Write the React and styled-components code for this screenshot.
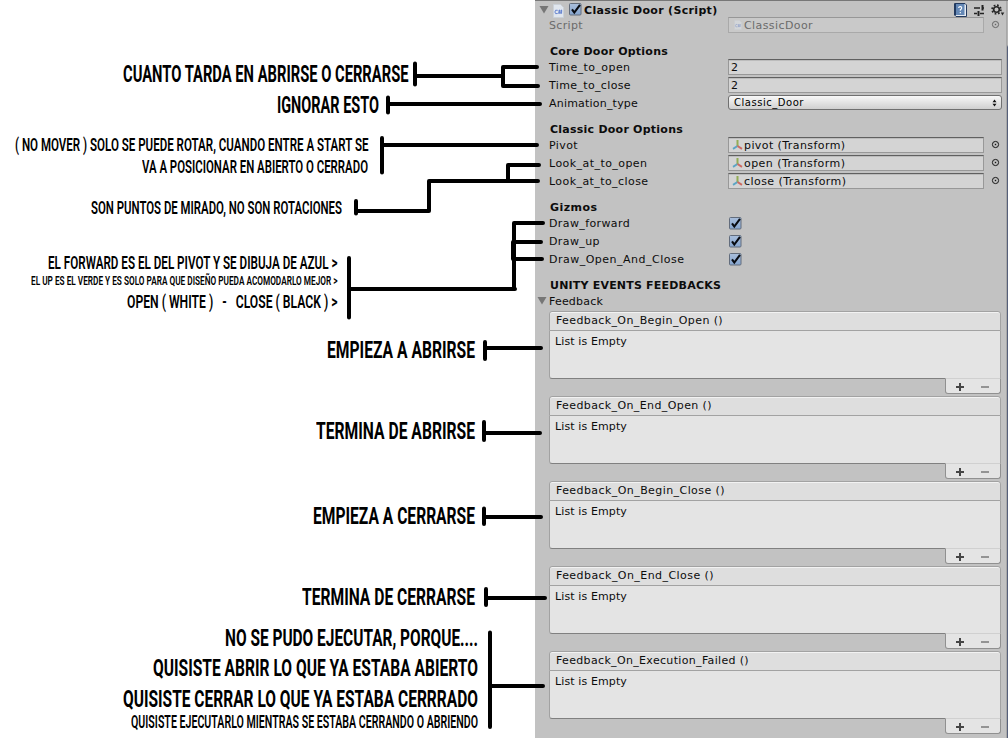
import React, { useLayoutEffect, useRef, useState } from "react";
import styled, { createGlobalStyle, css } from "styled-components";

const GlobalStyle = createGlobalStyle`
  * { box-sizing: border-box; }
  body { margin: 0; background: #fff; overflow: hidden; }
`;

const Page = styled.main`
  position: relative;
  display: flex;
  align-items: flex-start;
  width: 1008px;
  height: 742px;
  background: #fff;
`;

/* ---------- text fitted to a given width ---------- */

const FitBox = styled.span`
  display: block;
  flex: none;
  width: ${(p) => p.$width}px;
  white-space: pre;
`;

const FitInner = styled.span`
  display: inline-block;
  transform-origin: 0 50%;
`;

function Fit({ width, stretch, children }) {
  const ref = useRef(null);
  const [style, setStyle] = useState({});
  useLayoutEffect(() => {
    const natural = ref.current.getBoundingClientRect().width;
    setStyle(
      stretch
        ? { transform: `scaleX(${width / natural})` }
        : { letterSpacing: `${(width - natural) / children.length}px` }
    );
  }, []);
  return (
    <FitBox $width={width}>
      <FitInner ref={ref} style={style}>{children}</FitInner>
    </FitBox>
  );
}

/* ---------- notes on the left ---------- */

const Notes = styled.section`
  flex: none;
  width: 535px;
  display: flex;
  flex-direction: column;
  padding-right: 1px;
  color: #000;
  font-family: Roboto, "Liberation Sans", sans-serif;
`;

const Note = styled.div`
  display: flex;
  justify-content: flex-end;
  height: 16px;
  line-height: 16px;
  margin-top: ${(p) => p.$gap}px;
  padding-right: ${(p) => p.$inset}px;
  font-size: ${(p) => p.$size}px;
  font-weight: ${(p) => (p.$size > 20 ? 700 : 600)};
`;

const notes = [
  { text: "CUANTO TARDA EN ABRIRSE O CERRARSE", gap: 65.5, inset: 126, width: 285.5, size: 24 },
  { text: "IGNORAR ESTO", gap: 15, inset: 155, width: 102, size: 24 },
  { text: "( NO MOVER ) SOLO SE PUEDE ROTAR, CUANDO ENTRE A START SE", gap: 24.5, inset: 166, width: 353.5, size: 18.5 },
  { text: "VA A POSICIONAR EN ABIERTO O CERRADO", gap: 6, inset: 166, width: 226, size: 18.5 },
  { text: "SON PUNTOS DE MIRADO, NO SON ROTACIONES", gap: 25, inset: 192, width: 251, size: 18.5 },
  { text: "EL FORWARD ES EL DEL PIVOT Y SE DIBUJA DE AZUL >", gap: 38.5, inset: 197, width: 289.5, size: 18.5 },
  { text: "EL UP ES EL VERDE Y ES SOLO PARA QUE DISEÑO PUEDA ACOMODARLO MEJOR >", gap: 1.5, inset: 197, width: 306.5, size: 13.5 },
  { text: "OPEN ( WHITE )   -   CLOSE ( BLACK ) >", gap: 5.5, inset: 197, width: 210.5, size: 18.5 },
  { text: "EMPIEZA A ABRIRSE", gap: 32.5, inset: 59, width: 148, size: 24.5 },
  { text: "TERMINA DE ABRIRSE", gap: 65, inset: 59, width: 159, size: 24.5 },
  { text: "EMPIEZA A CERRARSE", gap: 69, inset: 59, width: 162, size: 24.5 },
  { text: "TERMINA DE CERRARSE", gap: 65, inset: 59, width: 173, size: 24.5 },
  { text: "NO SE PUDO EJECUTAR, PORQUE....", gap: 25, inset: 56, width: 253, size: 24.5 },
  { text: "QUISISTE ABRIR LO QUE YA ESTABA ABIERTO", gap: 14, inset: 56, width: 325, size: 24.5 },
  { text: "QUISISTE CERRAR LO QUE YA ESTABA CERRRADO", gap: 15, inset: 56, width: 355, size: 24.5 },
  { text: "QUISISTE EJECUTARLO MIENTRAS SE ESTABA CERRANDO O ABRIENDO", gap: 7, inset: 56, width: 347, size: 17.5 },
];

const Connectors = styled.svg`
  position: absolute;
  left: 0;
  top: 0;
  pointer-events: none;
  fill: none;
  stroke: #000;
  stroke-width: 4;
  stroke-linecap: round;
  stroke-linejoin: round;
`;

const connectorPaths = [
  "M415 63.5V84.5M415 76H503M537 67H503V86H538",
  "M388 97.5V112.5M388 104H540",
  "M382 138V172.500M382 145H537",
  "M356 201V213.500M356 211H429V181H538M508 181V165H539",
  "M349 258V317.500M349 289H515M514 289V223H543M513 242V259H542M514 242H541",
  "M485 342V359M485 348H541",
  "M484 422V440M484 433H540",
  "M484 508.500V524M484 517H541",
  "M486 589V605M486 598H545",
  "M490 632.500V727M490 686H543",
];

/* ---------- inspector panel ---------- */

const Panel = styled.section`
  flex: none;
  display: flex;
  flex-direction: column;
  width: 473px;
  height: 738px;
  padding: 1px 5px 0 0;
  background:
    linear-gradient(#b4b4b4 44px, #56607a 46px) right / 1px 100% no-repeat,
    linear-gradient(#a8a8a8, #a8a8a8) right 1px top / 1px 100% no-repeat,
    #c2c2c2;
  border-top: 1px solid #777;
  color: #0c0c0c;
  font-family: "DejaVu Sans", Verdana, sans-serif;
  font-size: 11px;
  line-height: 16px;
`;

const Header = styled.header`
  display: flex;
  align-items: center;
  height: 15px;
  padding-left: 3.5px;
  font-weight: 700;
`;

const HeaderTools = styled.div`
  display: flex;
  align-items: center;
  gap: 6px;
  margin-left: auto;
  margin-right: -2px;
  padding-top: 1px;
`;

const Rows = styled.div`
  display: flex;
  flex-direction: column;
  gap: 2px;
`;

const Row = styled.div`
  display: flex;
  height: 16px;
  padding-left: 14px;
  color: ${(p) => (p.$disabled ? "#6b6b6b" : "inherit")};
`;

const Label = styled.div`
  flex: none;
  width: 179px;
  line-height: 18px;
`;

const GroupTitle = styled.h2`
  height: 22px;
  margin: 0;
  padding: 9px 0 0 15px;
  font-size: 11px;
  line-height: 16px;
  font-weight: 700;
`;

const Field = styled.div`
  display: flex;
  align-items: center;
  width: ${(p) => (p.$object ? 256 : 274)}px;
  height: 16px;
  padding: 2px 0 0 2px;
  background: #d4d4d4;
  border: 1px solid #989898;
  border-top-color: #606060;
  box-shadow: inset 0 1px #bcbcbc;
  ${(p) => p.$disabled && css`
    background: #c9c9c9;
    border-color: #a9a9a9;
    border-top-color: #979797;
    box-shadow: none;
  `}
`;

const Dropdown = styled.div`
  display: flex;
  align-items: center;
  justify-content: space-between;
  width: 274px;
  height: 15px;
  padding: 1px 4px 0 5px;
  border: 1px solid #707070;
  border-radius: 3px;
  background: linear-gradient(#f8f8f8, #d0d0d0);
  font-size: 10px;
  color: #000;
`;

const Picker = styled.div`
  display: flex;
  align-items: center;
  margin-left: 7px;
  padding-bottom: 1px;
`;

const CheckCell = styled.div`
  display: flex;
  align-items: center;
  padding-left: 1px;
`;

const Foldout = styled.div`
  display: flex;
  height: 16px;
  padding-left: 1.5px;
  gap: 2.5px;
  line-height: 18px;

  svg { margin-top: 3px; }
`;

const Events = styled.div`
  display: flex;
  flex-direction: column;
  gap: 2px;
  padding: 2px 1px 0 14px;
`;

const EventCard = styled.article`
  height: 83px;
  width: 452px;
`;

const EventHead = styled.div`
  height: 20px;
  padding-left: 6px;
  line-height: 17px;
  background: #dedede;
  border: 1px solid #a2a2a2;
  border-radius: 3px 3px 0 0;
  box-shadow: inset 0 1px #f2f2f2;
`;

const EventBody = styled.div`
  height: 48px;
  padding: 3px 0 0 5px;
  background: #e4e4e4;
  border: 1px solid #a2a2a2;
  border-top: 0;
  border-bottom-color: #808080;
  border-radius: 0 0 0 3px;
`;

const EventFoot = styled.div`
  display: flex;
  align-items: center;
  justify-content: space-between;
  width: 56px;
  height: 16px;
  margin: -1px 0 0 auto;
  padding: 1px 11px 0 10px;
  background: #e4e4e4;
  border: 1px solid #909090;
  border-top-color: #d0d0d0;
  border-radius: 0 0 3px 3px;
`;

const Triangle = () => (
  <svg width="10" height="9"><path d="M0.500 1H9.500L5 8.500Z" fill="#767676" /></svg>
);

const Check = () => (
  <svg width="13" height="13">
    <defs>
      <linearGradient id="checkFill" x1="0" y1="0" x2="0" y2="1">
        <stop offset="0" stopColor="#a9bedb" />
        <stop offset="1" stopColor="#86a6d0" />
      </linearGradient>
    </defs>
    <rect x="0.500" y="0.500" width="11.500" height="11.500" rx="1" fill="url(#checkFill)" stroke="#626c7c" />
    <path d="M3 6.300L5.300 9.500L11 1.800" fill="none" stroke="#080b12" strokeWidth="2.100" />
  </svg>
);

const ScriptIcon = ({ small }) => (
  <svg width={small ? 8 : 11} height={small ? 10 : 14} viewBox="0 0 11 14" opacity={small ? 0.45 : 1}>
    <path d="M0.500 0.500H7.500L10.500 3.500V13.500H0.500Z" fill="#e0e6ee" stroke="#c9d0d8" strokeWidth="0.800" />
    <path d="M4.700 6.300Q2 5.300 1.900 8Q2 10.500 4.700 9.500M6.500 5.700L6 10M8.500 5.700L8 10M5.300 7H9.300M5.200 8.800H9.100" fill="none" stroke="#5878cc" strokeWidth="0.900" />
  </svg>
);

const AxisIcon = () => (
  <svg width="11" height="12" viewBox="0 0 11 12">
    <path d="M5.500 1V7" stroke="#93ad55" strokeWidth="2" />
    <path d="M5.500 7L1 9.800" stroke="#5ba5c4" strokeWidth="2" />
    <path d="M5.500 7L10 9.800" stroke="#cc6a61" strokeWidth="2" />
  </svg>
);

const Target = ({ color = "#161616" }) => (
  <svg width="9" height="9">
    <circle cx="4.500" cy="4.500" r="3.100" fill="none" stroke={color} strokeWidth="1" />
    <rect x="3.800" y="3.800" width="1.400" height="1.400" fill={color} />
  </svg>
);

const BookIcon = () => (
  <svg width="13" height="14">
    <path d="M0.500 0.500H11L12.500 2V13.500H2L0.500 12Z" fill="#e6ebf2" stroke="#233a5f" />
    <path d="M1 1H10.500V12H1Z" fill="#6488b6" />
    <path d="M1.500 1V12.500" stroke="#213b63" />
    <path d="M4.600 5Q4.800 3.500 6.300 3.600Q8 3.800 7.600 5.300Q7.400 6.100 6.300 6.700V7.800M6.300 9V10.200" fill="none" stroke="#fff" strokeWidth="1.100" />
  </svg>
);

const SlidersIcon = () => (
  <svg width="12" height="13">
    <path d="M1 4H7M9 4H11M1 9.500H4M7 9.500H11" stroke="#222" strokeWidth="1.500" />
    <path d="M9.500 1V6.500M5.500 7V12" stroke="#222" strokeWidth="2" />
  </svg>
);

const GearIcon = () => (
  <svg width="14" height="13">
    <circle cx="5.500" cy="5.500" r="2.800" fill="none" stroke="#252525" strokeWidth="1.600" />
    <circle cx="5.500" cy="5.500" r="4.400" fill="none" stroke="#252525" strokeWidth="1.700" strokeDasharray="1.730 1.730" />
    <path d="M9.800 8.500H13.300L11.500 11.500Z" fill="#252525" />
  </svg>
);

const UpDown = () => (
  <svg width="5" height="8"><path d="M0.500 3.300L2.500 0.500L4.500 3.300ZM0.500 4.700L2.500 7.500L4.500 4.700Z" fill="#111" /></svg>
);

const Plus = () => (
  <svg width="8" height="8"><path d="M0 4H8M4 0V8" stroke="#454545" strokeWidth="2" /></svg>
);

const Minus = () => (
  <svg width="8" height="8"><path d="M0 4H8" stroke="#949494" strokeWidth="2" /></svg>
);

const ObjectIcon = styled.span`
  display: flex;
  justify-content: center;
  width: 13px;
  margin-top: -2px;
`;

const ValueRow = ({ label, width }) => (
  <Row>
    <Label><Fit width={width}>{label}</Fit></Label>
    <Field>2</Field>
  </Row>
);

const ObjectRow = ({ label, width, value, valueWidth, disabled }) => (
  <Row $disabled={disabled}>
    <Label><Fit width={width}>{label}</Fit></Label>
    <Field $object $disabled={disabled}>
      <ObjectIcon>{disabled ? <ScriptIcon small /> : <AxisIcon />}</ObjectIcon>
      <Fit width={valueWidth}>{value}</Fit>
    </Field>
    <Picker><Target color={disabled ? "#666" : undefined} /></Picker>
  </Row>
);

const ToggleRow = ({ label, width }) => (
  <Row>
    <Label><Fit width={width}>{label}</Fit></Label>
    <CheckCell><Check /></CheckCell>
  </Row>
);

const events = [
  ["Feedback_On_Begin_Open ()", 167],
  ["Feedback_On_End_Open ()", 156],
  ["Feedback_On_Begin_Close ()", 169],
  ["Feedback_On_End_Close ()", 158],
  ["Feedback_On_Execution_Failed ()", 193],
];

const HeaderScript = styled.span`
  display: flex;
  margin: 2px 5px 0 4.5px;
`;

const HeaderTitle = styled.span`
  margin-left: 2px;
  padding-top: 3px;
`;

export default function App() {
  return (
    <Page>
      <GlobalStyle />
      <Notes>
        {notes.map((n) => (
          <Note key={n.text} $gap={n.gap} $inset={n.inset} $size={n.size}>
            <Fit width={n.width} stretch>{n.text}</Fit>
          </Note>
        ))}
      </Notes>
      <Panel>
        <Header>
          <Triangle />
          <HeaderScript><ScriptIcon /></HeaderScript>
          <Check />
          <HeaderTitle><Fit width={133.5}>Classic Door (Script)</Fit></HeaderTitle>
          <HeaderTools><BookIcon /><SlidersIcon /><GearIcon /></HeaderTools>
        </Header>
        <Rows>
          <ObjectRow label="Script" width={34} value="ClassicDoor" valueWidth={69} disabled />
          <GroupTitle><Fit width={118}>Core Door Options</Fit></GroupTitle>
          <ValueRow label="Time_to_open" width={81.5} />
          <ValueRow label="Time_to_close" width={82} />
          <Row>
            <Label><Fit width={89}>Animation_type</Fit></Label>
            <Dropdown><Fit width={70}>Classic_Door</Fit><UpDown /></Dropdown>
          </Row>
          <GroupTitle><Fit width={133}>Classic Door Options</Fit></GroupTitle>
          <ObjectRow label="Pivot" width={29} value="pivot (Transform)" valueWidth={101.5} />
          <ObjectRow label="Look_at_to_open" width={98.5} value="open (Transform)" valueWidth={101.5} />
          <ObjectRow label="Look_at_to_close" width={99.5} value="close (Transform)" valueWidth={102.5} />
          <GroupTitle><Fit width={47.5}>Gizmos</Fit></GroupTitle>
          <ToggleRow label="Draw_forward" width={81} />
          <ToggleRow label="Draw_up" width={51} />
          <ToggleRow label="Draw_Open_And_Close" width={135.5} />
          <GroupTitle><Fit width={171}>UNITY EVENTS FEEDBACKS</Fit></GroupTitle>
          <Foldout><Triangle /><Fit width={54}>Feedback</Fit></Foldout>
        </Rows>
        <Events>
          {events.map(([name, width]) => (
            <EventCard key={name}>
              <EventHead><Fit width={width}>{name}</Fit></EventHead>
              <EventBody><Fit width={72}>List is Empty</Fit></EventBody>
              <EventFoot><Plus /><Minus /></EventFoot>
            </EventCard>
          ))}
        </Events>
      </Panel>
      <Connectors width="560" height="742">
        {connectorPaths.map((d) => <path key={d} d={d} />)}
      </Connectors>
    </Page>
  );
}
